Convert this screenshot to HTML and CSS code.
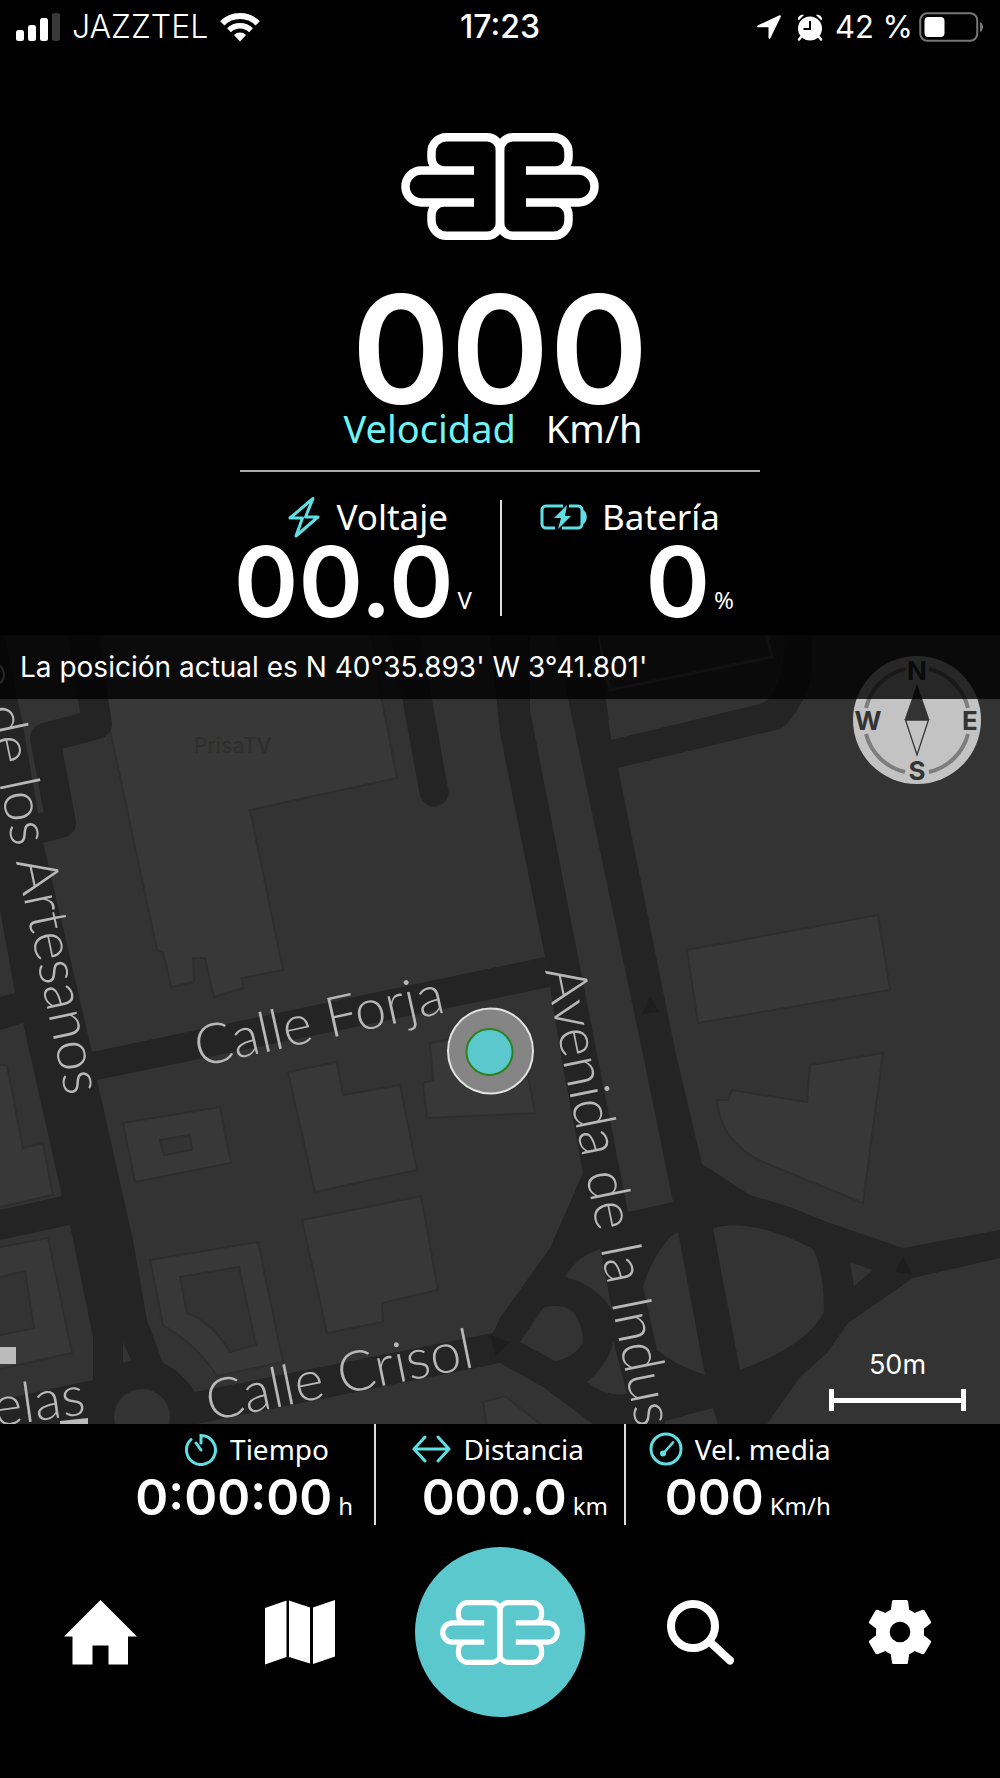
FILE: index.html
```html
<!DOCTYPE html>
<html lang="es">
<head>
<meta charset="utf-8">
<meta name="viewport" content="width=device-width, initial-scale=1">
<title>Velocidad</title>
<link rel="stylesheet" href="styles.css">
</head>
<body>
<svg class="defs" aria-hidden="true">
  <symbol id="logo" viewBox="0 0 198 107">
    <g fill="none" stroke="currentColor" stroke-width="8.5">
      <path d="M73 37.500H20.500a16 16 0 0 0 0 32H73M43 37.500A12.500 12.500 0 0 1 30.500 25v-6A15 15 0 0 1 45.500 4.250H86A13 13 0 0 1 99 17.250v72.500A13 13 0 0 1 86 102.750H45.500A15 15 0 0 1 30.500 88v-6A12.500 12.500 0 0 1 43 69.500"/>
      <path d="M125 37.500h52.500a16 16 0 0 1 0 32H125M155 37.500A12.500 12.500 0 0 0 167.500 25v-6A15 15 0 0 0 152.500 4.250H112A13 13 0 0 0 99 17.250v72.500A13 13 0 0 0 112 102.750h40.500A15 15 0 0 0 167.500 88v-6A12.500 12.500 0 0 0 155 69.500"/>
    </g>
  </symbol>
</svg>

<header class="status">
  <div class="status-side">
    <svg class="signal" viewBox="0 0 44 28" aria-hidden="true"><rect x="0" y="17" width="8" height="11" rx="2.500"/><rect x="12" y="12" width="8" height="16" rx="2.500"/><rect x="24" y="5" width="8" height="23" rx="2.500"/><rect x="36" y="0" width="8" height="28" rx="2.500" opacity=".22"/></svg>
    <span class="carrier">JAZZTEL</span>
    <svg class="wifi" viewBox="0 0 40 30" aria-hidden="true"><g fill="none" stroke="currentColor"><path d="M2.300 11.300a25 25 0 0 1 35.400 0" stroke-width="6"/><path d="M9 18.300a15.600 15.600 0 0 1 22 0" stroke-width="5.500"/></g><path d="M20 29.500l-6-6.500a8.600 8.600 0 0 1 12 0z"/></svg>
  </div>
  <time class="clock">17:23</time>
  <div class="status-side status-end">
    <svg class="arrow" viewBox="0 0 24 24" aria-hidden="true"><path d="M22.500.3 1 10.300c-1.400.8-1 2 .4 2H11.500V22.500c0 1.600 1.300 2 2 .5L23.800 1.800C24.300.7 23.500-.1 22.500.3z"/></svg>
    <svg class="alarm" viewBox="0 0 26 27" aria-hidden="true"><circle cx="13" cy="14.500" r="12"/><path d="M1 5.500C.8 2.500 4 0 7 1L1.800 6.300zM25 5.500c.2-3-3-5.500-6-4.500l5.200 5.300z"/><path d="M4 23l-2 2.500M22 23l2 2.500" stroke="currentColor" stroke-width="2.500" stroke-linecap="round"/><path d="M13 7v8H6.500" fill="none" stroke="#000" stroke-width="2"/></svg>
    <span class="charge">42 %</span>
    <svg class="cell" viewBox="0 0 65 30" aria-hidden="true"><rect x="1.250" y="1.250" width="57" height="27.500" rx="7" fill="none" stroke="#777" stroke-width="2"/><rect x="5.500" y="5" width="20" height="20" rx="4"/><path d="M61 10c4 1.500 4 8.500 0 10z" fill="#777"/></svg>
  </div>
</header>

<main>
  <section class="speed">
    <svg class="brand" role="img" aria-label="Logo"><use href="#logo"/></svg>
    <div class="speed-value">000</div>
    <h1 class="speed-label"><span class="accent">Velocidad</span><span>Km/h</span></h1>
  </section>

  <section class="power">
    <div class="metric">
      <h2 class="metric-label"><svg class="bolt" viewBox="0 0 32 43" aria-hidden="true"><path d="M25 2.500 2 22h12.500L8 40 30 21H17.500z" fill="none" stroke="currentColor" stroke-width="3" stroke-linejoin="round"/></svg>Voltaje</h2>
      <p class="metric-value">00.0<span class="unit">V</span></p>
    </div>
    <div class="metric metric-battery">
      <h2 class="metric-label"><svg class="pack" viewBox="0 0 48 26" aria-hidden="true"><path d="M23 2H6a4 4 0 0 0-4 4v14a4 4 0 0 0 4 4h9M29 2h9a4 4 0 0 1 4 4v14a4 4 0 0 1-4 4H22" fill="none" stroke="currentColor" stroke-width="3"/><path d="M43 6c5 2 5 12 0 14zM27 1 14 14h7l-3 11 13-13h-6z"/></svg>Batería</h2>
      <p class="metric-value">0<span class="unit">%</span></p>
    </div>
  </section>

  <section class="map" aria-label="Mapa">
    <svg class="map-canvas" viewBox="0 635 1000 789" preserveAspectRatio="xMidYMid slice">
      <g class="building">
        <path d="M100 634 110 730 157 950 163 952 171 987 194 982 193 958 205 958 214 997 243 988 242 978 283 970 250 810 397 778 380 690 372 634z"/>
        <path d="M687 950 878 915 890 990 698 1023z"/>
        <path d="M810 1065 883 1053 863 1203 763 1162Q720 1142 717 1100L728 1100 732 1090 807 1102z"/>
        <path fill-rule="evenodd" d="M123 1123 220 1107 231 1163 135 1182zM160 1140 190 1135 192 1150 164 1155z"/>
        <path d="M288 1072 337 1062 343 1095 400 1085 417 1170 315 1192z"/>
        <path d="M302 1220 421 1196 438 1290 382 1303 383 1322 327 1333z"/>
        <path fill-rule="evenodd" d="M150 1260 258 1242 283 1362 217 1376Q197 1345 163 1325zM180 1277 239 1267 256 1345 230 1352Q213 1323 187 1313z"/>
        <path d="M430 1043 433 1080 423 1083 427 1118 535 1113 525 1060 515 1028z"/>
        <path fill-rule="evenodd" d="M-4 1248 48 1238 72 1353-4 1370zM-4 1278 25 1271 34 1328-4 1336z"/>
        <path d="M-4 1065 7 1065 23 1148 43 1143 53 1195-4 1208z"/>
        <path d="M483 1402 505 1396 545 1428 487 1428z"/>
      </g>
      <path class="lot" d="M596 630 610 690 772 657 765 630"/>
      <g class="road">
        <path d="M490 634 530 634 530 710 580 967 628 1212 643 1287 657 1350 612 1350 612 1293 583 1173 563 1067 550 987 545 957 500 733z"/>
        <path d="M558 634 598 634 611 740 760 704Q783 697 785 634H812V670Q810 695 787 724L780 729 618 768 675 1050 702 1164 750 1195 790 1207 827 1222 903 1248 1000 1230V1258L913 1278 848 1323 827 1353 800 1377 767 1424H593L543 1387 500 1363 197 1424H0V1400L93 1380V1337L70 1225 0 1240V1210L62 1196 23 1023 0 1030V997L15 993 0 910V634H4L22 720 43 842 92 1052 545 957 550 987 97 1080 133 1240 147 1320 163 1363Q180 1370 195 1392L493 1333 500 1318 550 1248 583 1173 628 1212 673 1202 642 1050 568 699z"/>
      </g>
      <g class="lane">
        <path d="M405 634 417 699 434 792" stroke-width="29"/>
        <path d="M83 634 97 724 45 738 61 823 25 832" stroke-width="30"/>
      </g>
      <g class="land">
        <path d="M713 1228Q755 1218 813 1249 824 1270 824 1312 808 1345 740 1370z"/>
        <path d="M678 1232 670 1237Q652 1257 643 1287L657 1350Q675 1365 705 1375z"/>
        <path d="M600 1249Q577 1256 565 1277 595 1284 612 1310z"/>
        <path d="M520 1342 543 1308Q560 1302 573 1312 583 1323 583 1343 573 1358 555 1361z"/>
        <path d="M613 1340Q612 1360 587 1382 605 1397 627 1394z"/>
        <path d="M850 1262 873 1270 854 1286z"/>
        <path d="M665 1421 713 1408 718 1424H665z"/>
        <path d="M123 1342 131 1360 123 1363z"/>
        <circle cx="142" cy="1417" r="28"/>
      </g>
      <path class="heading" d="M650 996 659 1012 642 1014zM903 1256 912 1274 895 1272zM490 1335 510 1342 496 1356z"/>
      <g class="street">
        <text transform="translate(199 1067) rotate(-12.500)">Calle Forja</text>
        <text transform="translate(210 1421) rotate(-11.500)">Calle Crisol</text>
        <text transform="translate(545 970) rotate(78.700)">Avenida de la Industria</text>
        <text transform="translate(66 1097) rotate(78)" text-anchor="end">Camino de los Artesanos</text>
        <text transform="translate(87 1414) rotate(-8)" text-anchor="end">elas</text>
      </g>
      <text class="poi" x="194" y="753">PrisaTV</text>
      <path d="M0 1347h16v17H0zM60 1421l28-3v7H60z" fill="#bbb"/>
      <circle cx="490.500" cy="1051" r="42.500" fill="#858585" stroke="#e2e2e2" stroke-width="2"/>
      <circle cx="489.500" cy="1052" r="23" fill="#5bc8ce" stroke="#2f801f" stroke-width="2"/>
      <g class="compass">
        <circle cx="917" cy="720" r="64" fill="#c3c3c3"/>
        <g fill="none" stroke="#7d7d7d" stroke-width="4"><path d="M866 708A52.500 52.500 0 0 1 905 669M929 669A52.500 52.500 0 0 1 968 708M968 734A52.500 52.500 0 0 1 929 772M905 772A52.500 52.500 0 0 1 866 734"/></g>
        <path d="M917 684 929.500 720h-25z" fill="#333"/>
        <path d="M905.500 720h23L917 755z" fill="none" stroke="#333" stroke-width="1.300"/>
        <g class="points"><text x="917" y="680">N</text><text x="917" y="780">S</text><text x="868" y="730">W</text><text x="970" y="730">E</text></g>
      </g>
    </svg>
    <p class="position">La posición actual es N 40°35.893' W 3°41.801'</p>
    <div class="scale"><span>50m</span><div class="scale-bar"></div></div>
  </section>

  <section class="trip">
    <div class="stat stat-time">
      <h2 class="stat-label"><svg class="icon-34" viewBox="0 0 34 34" aria-hidden="true"><path d="M17 11V3.500A14.500 14.500 0 1 1 7 7.500M12 11l5 7" fill="none" stroke="currentColor" stroke-width="3" stroke-linecap="round"/></svg>Tiempo</h2>
      <p class="stat-value">0:00:00<span class="unit">h</span></p>
    </div>
    <div class="stat stat-distance">
      <h2 class="stat-label"><svg class="icon-39" viewBox="0 0 39 34" aria-hidden="true"><path d="M13 5 2 17l11 12M26 5l11 12-11 12M2 17h35" fill="none" stroke="currentColor" stroke-width="3" stroke-linecap="round"/></svg>Distancia</h2>
      <p class="stat-value">000.0<span class="unit">km</span></p>
    </div>
    <div class="stat stat-average">
      <h2 class="stat-label"><svg class="icon-34" viewBox="0 0 34 34" aria-hidden="true"><circle cx="17" cy="17" r="15" fill="none" stroke="currentColor" stroke-width="3"/><path d="M24 10.500l-9 10" stroke="currentColor" stroke-width="2.600" stroke-linecap="round"/><circle cx="14" cy="21.500" r="3"/></svg>Vel. media</h2>
      <p class="stat-value">000<span class="unit">Km/h</span></p>
    </div>
  </section>
</main>

<nav class="tabs" aria-label="Principal">
  <a href="#inicio" aria-label="Inicio"><svg class="tab-home" viewBox="0 0 73 65"><path d="M36.500 0 73 36.500H64V64.500H44.500V45.500H28.500V64.500H8.500V36.500H0z"/></svg></a>
  <a href="#mapa" aria-label="Mapa"><svg class="tab-map" viewBox="0 0 70 65"><path d="M0 8 21.500.5v56.500L0 64.500zM24 .5 45 7.500v56L24 57zM48 7.500 70 0v56.500L48 64z"/></svg></a>
  <a class="tab-main" href="#velocidad" aria-label="Velocidad"><svg class="tab-logo"><use href="#logo"/></svg></a>
  <a href="#buscar" aria-label="Buscar"><svg class="tab-search" viewBox="0 0 67 65"><g fill="none" stroke="currentColor" stroke-width="8"><circle cx="26" cy="26" r="22"/><path d="M43 42l20 18.500" stroke-linecap="round"/></g></svg></a>
  <a href="#ajustes" aria-label="Ajustes"><svg class="tab-gear" viewBox="2.400 2.400 19.200 19.200"><path fill-rule="evenodd" d="M19.140 12.940c.04-.3.060-.61.060-.94 0-.32-.02-.64-.07-.94l2.030-1.580c.18-.14.230-.41.120-.61l-1.920-3.320c-.12-.22-.37-.29-.59-.22l-2.390.960c-.5-.38-1.030-.7-1.620-.94l-.36-2.540c-.04-.24-.24-.41-.48-.41h-3.840c-.24 0-.43.170-.47.410l-.36 2.540c-.59.240-1.130.570-1.620.940l-2.390-.96c-.22-.08-.47 0-.59.220L2.740 8.870c-.12.210-.08.470.120.610l2.030 1.580c-.05.3-.09.630-.09.940s.02.640.070.940l-2.030 1.580c-.18.140-.23.410-.12.610l1.920 3.320c.12.220.370.290.590.220l2.390-.96c.5.380 1.030.7 1.620.940l.36 2.540c.05.240.240.410.480.410h3.840c.24 0 .44-.17.470-.41l.36-2.540c.59-.24 1.130-.56 1.620-.94l2.390.960c.22.080.470 0 .59-.22l1.920-3.320c.12-.22.070-.47-.12-.61l-2.010-1.580zM12 15.100a3.100 3.100 0 1 1 0-6.200 3.100 3.100 0 0 1 0 6.200z"/></svg></a>
</nav>
</body>
</html>
```
FILE: styles.css
```css
* {
  box-sizing: border-box;
}

body {
  margin: 0;
  min-height: 100vh;
  background: #000;
  color: #fff;
  font-family: "Noto Sans", "Open Sans", sans-serif;
}

h1, h2, p {
  margin: 0;
  font-weight: 400;
}

svg {
  display: block;
  flex: none;
  fill: currentColor;
}

.defs {
  width: 0;
  height: 0;
  position: absolute;
}

/* Status bar */
.status {
  display: grid;
  grid-template-columns: 1fr auto 1fr;
  align-items: center;
  height: 54px;
  padding: 0 16px;
  font: 300 32px/54px Inter, sans-serif;
}

.status-side {
  display: flex;
  align-items: center;
  gap: 12px;
}

.status-end {
  justify-content: flex-end;
  gap: 6px;
}

.clock { font-weight: 500; }
.signal { width: 44px; height: 28px; }
.wifi { width: 40px; height: 30px; }
.arrow { width: 24px; height: 24px; margin-right: 10px; }
.alarm { width: 26px; height: 27px; margin-right: 6px; }
.charge { font-size: 31px; font-weight: 400; }
.cell { width: 65px; height: 30px; }

/* Speed */
.speed {
  display: flex;
  flex-direction: column;
  align-items: center;
  padding-top: 79px;
}

.brand {
  width: 198px;
  height: 107px;
}

.speed-value {
  margin-top: 54px;
  font: 600 150px/112px Inter, sans-serif;
}

.speed-label {
  display: flex;
  gap: 30px;
  padding-right: 14px;
  font-size: 38px;
  line-height: 44px;
}

.accent { color: #6ff3f5; }

/* Voltage and battery */
.power {
  display: grid;
  grid-template-columns: repeat(2, minmax(0, 1fr));
  width: 52%;
  margin: 20px auto 5px;
  padding-top: 28px;
  border-top: 2px solid #aaa;
}

.metric {
  display: flex;
  flex-direction: column;
  align-items: flex-end;
  height: 130px;
  padding-right: 28px;
}

.metric-battery {
  padding-right: 26px;
  background: linear-gradient(#ddd, #ddd) no-repeat left top / 2px 116px;
}

.metric-label {
  display: flex;
  align-items: center;
  gap: 16px;
  height: 34px;
  padding-right: 24px;
  font-size: 35px;
  line-height: 34px;
}

.metric-battery .metric-label {
  gap: 14px;
  padding-right: 14px;
}

.metric-label svg,
.stat-label svg { color: #5fdfe4; }

.bolt { width: 32px; height: 43px; }
.pack { width: 48px; height: 26px; }

.metric-value {
  display: flex;
  align-items: flex-end;
  gap: 4px;
  font: 600 98px/96px Inter, sans-serif;
}

.unit {
  font: 400 24px/32px "Noto Sans", "Open Sans", sans-serif;
}

.metric-value .unit { margin-bottom: 14px; }

/* Map */
.map {
  position: relative;
  overflow: hidden;
  aspect-ratio: 1000 / 789;
  background: #333;
}

.map-canvas {
  width: 100%;
  height: 100%;
}

.building path {
  fill: #383838;
  stroke: #2e2e2e;
  stroke-width: 2px;
}

.lot {
  fill: none;
  stroke: #555;
  stroke-width: 3px;
}

.road { fill: #242424; }
.land { fill: #333; }
.heading { fill: #1e1e1e; }

.lane {
  fill: none;
  stroke: #242424;
  stroke-linecap: round;
  stroke-linejoin: round;
}

.street {
  fill: #b8b8b8;
  font: 300 56px Lato, sans-serif;
}

.poi {
  fill: #2f2f2f;
  font: 500 21px Inter, sans-serif;
}

.points {
  fill: #333;
  font: 700 26px Inter, sans-serif;
  text-anchor: middle;
}

.position {
  position: absolute;
  inset: 0 0 auto;
  padding: 0 20px;
  background: rgba(0, 0, 0, 0.8);
  font: 400 28px/64px Inter, sans-serif;
}

.scale {
  position: absolute;
  right: 34px;
  bottom: 13px;
  width: 137px;
  font: 400 27px/32px Inter, sans-serif;
  text-align: center;
}

.scale-bar {
  height: 22px;
  margin-top: 8px;
  border: solid #fff;
  border-width: 0 5px;
  background: linear-gradient(#fff, #fff) no-repeat center / 100% 5px;
}

/* Trip totals */
.trip {
  display: grid;
  grid-template-columns: 374fr 250fr 376fr;
}

.stat {
  display: flex;
  flex-direction: column;
  align-items: flex-end;
  padding-top: 5px;
}

.stat + .stat { border-left: 2px solid #ddd; }
.stat-time { padding-right: 21px; }
.stat-distance { padding-right: 16px; }
.stat-average { padding-right: 45%; }

.stat-label {
  display: flex;
  align-items: center;
  gap: 12px;
  font-size: 28px;
  line-height: 40px;
}

.stat-time .stat-label,
.stat-distance .stat-label { padding-right: 24px; }

.icon-34 { width: 34px; height: 34px; }
.icon-39 { width: 39px; height: 34px; }

.stat-value {
  display: flex;
  align-items: baseline;
  gap: 6px;
  font: 600 50px/56px Inter, sans-serif;
}

/* Tab bar */
.tabs {
  display: grid;
  grid-template-columns: repeat(5, 1fr);
  place-items: center;
  padding: 22px 0 61px;
}

.tabs a { color: #fff; }

.tab-main {
  display: grid;
  place-items: center;
  width: 170px;
  height: 170px;
  border-radius: 50%;
  background: #5bc8ce;
}

.tab-home { width: 73px; height: 65px; }
.tab-map { width: 70px; height: 65px; }
.tab-logo { width: 120px; height: 65px; }
.tab-search { width: 67px; height: 65px; }
.tab-gear { width: 64px; height: 64px; }
```
